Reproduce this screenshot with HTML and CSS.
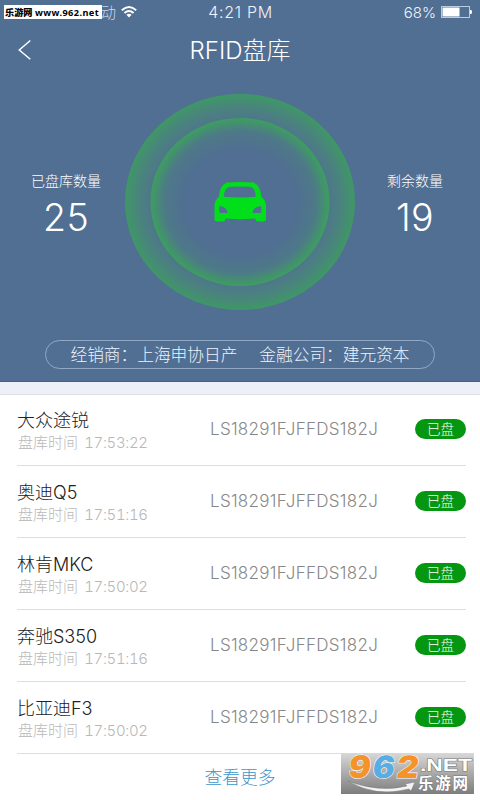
FILE: index.html
```html
<!DOCTYPE html>
<html lang="zh-CN">
<head>
<meta charset="utf-8">
<title>RFID盘库</title>
<link rel="stylesheet" href="styles.css">
</head>
<body>
<main class="screen">
  <section class="hero">
    <div class="status">
      <div class="carrier"><span class="carrier-name">动</span>
        <svg class="wifi" width="16" height="12" viewBox="0 0 16 12"><g fill="none" stroke="#fff" stroke-width="1.9"><path d="M.8 4.3Q8-2.2 15.2 4.3"/><path d="M3.4 7Q8 3 12.6 7"/></g><path d="M5.4 8.8Q8 6.8 10.6 8.8L8 11.4Z" fill="#fff"/></svg>
      </div>
      <div class="clock">4:21 PM</div>
      <div class="power"><span>68%</span>
        <svg width="32" height="12" viewBox="0 0 32 12"><rect x=".5" y=".5" width="28" height="11" fill="none" stroke="#b9cbe0"/><rect x="1.5" y="1.5" width="17" height="9" fill="#fff"/><path d="M29 4h1.5q1 2 0 4H29z" fill="#fff"/></svg>
      </div>
      <div class="site-tag"><b>乐游网</b> <span>www.962.net</span></div>
    </div>
    <header class="nav">
      <svg class="back" width="14" height="22" viewBox="0 0 14 22"><path d="M12.300 1.500 1.300 11l11 9.300" fill="none" stroke="#fff" stroke-width="1.500"/></svg>
      <h1>RFID盘库</h1>
    </header>
    <div class="summary">
      <div class="stat done"><div class="label">已盘库数量</div><div class="count">25</div></div>
      <svg class="radar" width="232" height="218" viewBox="0 0 232 218">
        <defs>
          <radialGradient id="outer"><stop offset=".68" stop-color="#38a95a" stop-opacity="0"/><stop offset=".78" stop-color="#40a060" stop-opacity=".18"/><stop offset=".88" stop-color="#40a060" stop-opacity=".42"/><stop offset="1" stop-color="#38a458" stop-opacity=".78"/></radialGradient>
          <radialGradient id="inner"><stop offset=".62" stop-color="#38a95a" stop-opacity="0"/><stop offset=".84" stop-color="#40a060" stop-opacity=".22"/><stop offset="1" stop-color="#38a854" stop-opacity=".8"/></radialGradient>
        </defs>
        <ellipse cx="116" cy="109" rx="115" ry="108" fill="url(#outer)"/>
        <ellipse cx="116" cy="109" rx="89.500" ry="84" fill="url(#inner)"/>
        <path fill="#00df1a" fill-rule="evenodd" d="M103 89.500Q116 88.500 129 89.500Q136 91.500 137.500 104Q141.500 107 142 112V126Q142 128.500 140 128.500H134Q132 128.500 131 125.500Q116 127 102 125.500Q101 128.500 99 128.500H93Q90.500 128.500 90.500 126V112Q91 107 94.800 104Q96 91.500 103 89.500ZM106 93.800Q100.500 94.500 99.800 103.800Q116 105 131.700 103.800Q131.500 94.500 126 93.800Q116 93.200 106 93.800ZM95.500 113Q94.500 120 96.500 120H103.800Q103 114 95.500 113ZM137 113Q129 114 128.500 120H136Q138 120 137 113Z"/>
      </svg>
      <div class="stat left"><div class="label">剩余数量</div><div class="count">19</div></div>
    </div>
    <div class="firm"><span>经销商：上海申协日产</span><span>金融公司：建元资本</span></div>
  </section>
  <div class="band"></div>
  <ul class="cars">
    <li><div class="car"><div class="name">大众途锐</div><div class="time">盘库时间 <span>17:53:22</span></div></div><div class="vin">LS18291FJFFDS182J</div><div class="badge">已盘</div></li>
    <li><div class="car"><div class="name">奥迪Q5</div><div class="time">盘库时间 <span>17:51:16</span></div></div><div class="vin">LS18291FJFFDS182J</div><div class="badge">已盘</div></li>
    <li><div class="car"><div class="name">林肯MKC</div><div class="time">盘库时间 <span>17:50:02</span></div></div><div class="vin">LS18291FJFFDS182J</div><div class="badge">已盘</div></li>
    <li><div class="car"><div class="name">奔驰S350</div><div class="time">盘库时间 <span>17:51:16</span></div></div><div class="vin">LS18291FJFFDS182J</div><div class="badge">已盘</div></li>
    <li><div class="car"><div class="name">比亚迪F3</div><div class="time">盘库时间 <span>17:50:02</span></div></div><div class="vin">LS18291FJFFDS182J</div><div class="badge">已盘</div></li>
  </ul>
  <a class="more">查看更多</a>
  <svg class="logo" width="133" height="41" viewBox="0 0 133 41">
    <defs><linearGradient id="plate" x2="0" y2="1"><stop stop-color="#d8d8d8"/><stop offset=".5" stop-color="#aaa"/><stop offset="1" stop-color="#7d7d7d"/></linearGradient></defs>
    <rect width="133" height="41" fill="url(#plate)"/>
    <path d="M7 28Q38 40 66 33L64 31 74 29 70 38 68 36Q35 45 7 28Z" fill="#f4f4f4" stroke="#777" stroke-width=".5"/>
    <g class="digits" transform="skewX(-8)"><text x="10" y="24.500" textLength="22" lengthAdjust="spacingAndGlyphs" fill="#f5922a">9</text><text x="34" y="24.500" textLength="22" lengthAdjust="spacingAndGlyphs" fill="#58aee3">6</text><text x="58" y="24.500" textLength="22" lengthAdjust="spacingAndGlyphs" fill="#f5922a">2</text></g>
    <text class="net" x="79" y="18" textLength="52" lengthAdjust="spacingAndGlyphs">.NET</text>
    <text class="cn" x="77" y="36" textLength="50">乐游网</text>
  </svg>
</main>
</body>
</html>
```
FILE: styles.css
```css
* { box-sizing: border-box; }
body { margin: 0; font-family: Inter, "Noto Sans CJK SC", sans-serif; font-weight: 300; }
.screen { position: relative; width: 480px; height: 800px; overflow: hidden; background: #fff; }
.hero { height: 382px; background: #516e93; border-bottom: 1px solid #46607f; color: #fff; display: flex; flex-direction: column; }
.status { position: relative; height: 25px; display: grid; grid-template-columns: 1fr auto 1fr; font-size: 15px; line-height: 25px; color: #eef4fb; }
.carrier { display: flex; align-items: center; height: 24px; padding-left: 101px; gap: 5px; }
.carrier-name { width: 15px; color: #cad8e8; line-height: 27px; }
.clock { font-size: 16px; letter-spacing: .7px; padding-left: 1px; }
.power { display: flex; align-items: center; height: 24px; justify-content: flex-end; gap: 5px; padding-right: 7px; }
.site-tag { position: absolute; left: 4px; top: 5px; width: 98px; height: 14px; background: #fff; color: #000; font: 700 9.2px/15px "Noto Sans", "Noto Sans CJK SC", sans-serif; white-space: nowrap; padding-left: 1px; }
.site-tag span { letter-spacing: .42px; }
.nav { height: 50px; display: grid; grid-template-columns: 1fr auto 1fr; align-items: center; }
.back { margin-left: 18px; }
h1 { margin: 2px 0 0; font-size: 24px; line-height: 48px; font-weight: 300; }
.summary { height: 236px; margin-top: 18px; display: grid; grid-template-columns: 124px 232px 124px; }
.stat { padding-top: 78px; text-align: center; }
.done { padding-left: 8px; }
.left { padding-right: 6px; }
.label { font-size: 14px; line-height: 20px; }
.count { font-size: 37.5px; line-height: 45px; margin-top: 4px; font-weight: 300; letter-spacing: .3px; }
.firm { margin: 11px 45px 0; height: 29px; border: 1px solid #91a9c6; border-radius: 15px; display: flex; justify-content: center; gap: 22px; font-size: 16.7px; line-height: 28px; white-space: nowrap; color: #edf4fc; }
.band { height: 13px; background: #edf1f7; border-bottom: 1px solid #dedfe2; }
.cars { list-style: none; margin: 0; padding: 0 14px 0 17px; }
.cars li { height: 72px; display: grid; grid-template-columns: 193px 205px 51px; align-items: start; border-bottom: 1px solid #dedede; }
.cars li:first-child { height: 71px; }
.car { padding-top: 14px; }
.cars li:first-child .car { padding-top: 13px; }
.name { font-size: 18px; line-height: 25px; color: #222; }
.time { font-size: 15px; line-height: 20px; padding-left: 1px; color: #b8b8b8; }
.time span { margin-left: 2px; font-variant-numeric: tabular-nums; letter-spacing: -.35px; }
.vin { padding-top: 24px; font-size: 17px; line-height: 22px; color: #888; letter-spacing: .28px; }
.badge { margin-top: 25px; height: 20px; border-radius: 10px; background: #069710; color: #fff; text-align: center; font-size: 13.5px; line-height: 21px; }
.cars li:first-child .vin { padding-top: 23px; }
.cars li:first-child .badge { margin-top: 24px; }
.more { display: block; text-align: center; color: #3a96cb; font-size: 17.8px; line-height: 48px; }
.logo { position: absolute; left: 341px; top: 753px; overflow: visible; }
.digits { font: 900 31px Inter, sans-serif; stroke: #fff; stroke-width: 1px; paint-order: stroke; }
.net { font: 700 16.5px "Liberation Sans", sans-serif; fill: #fff; stroke: #777; stroke-width: 1px; paint-order: stroke; }
.cn { font: 700 15.5px "Noto Sans CJK SC", sans-serif; fill: #fff; stroke: #777; stroke-width: 1px; paint-order: stroke; }
```
